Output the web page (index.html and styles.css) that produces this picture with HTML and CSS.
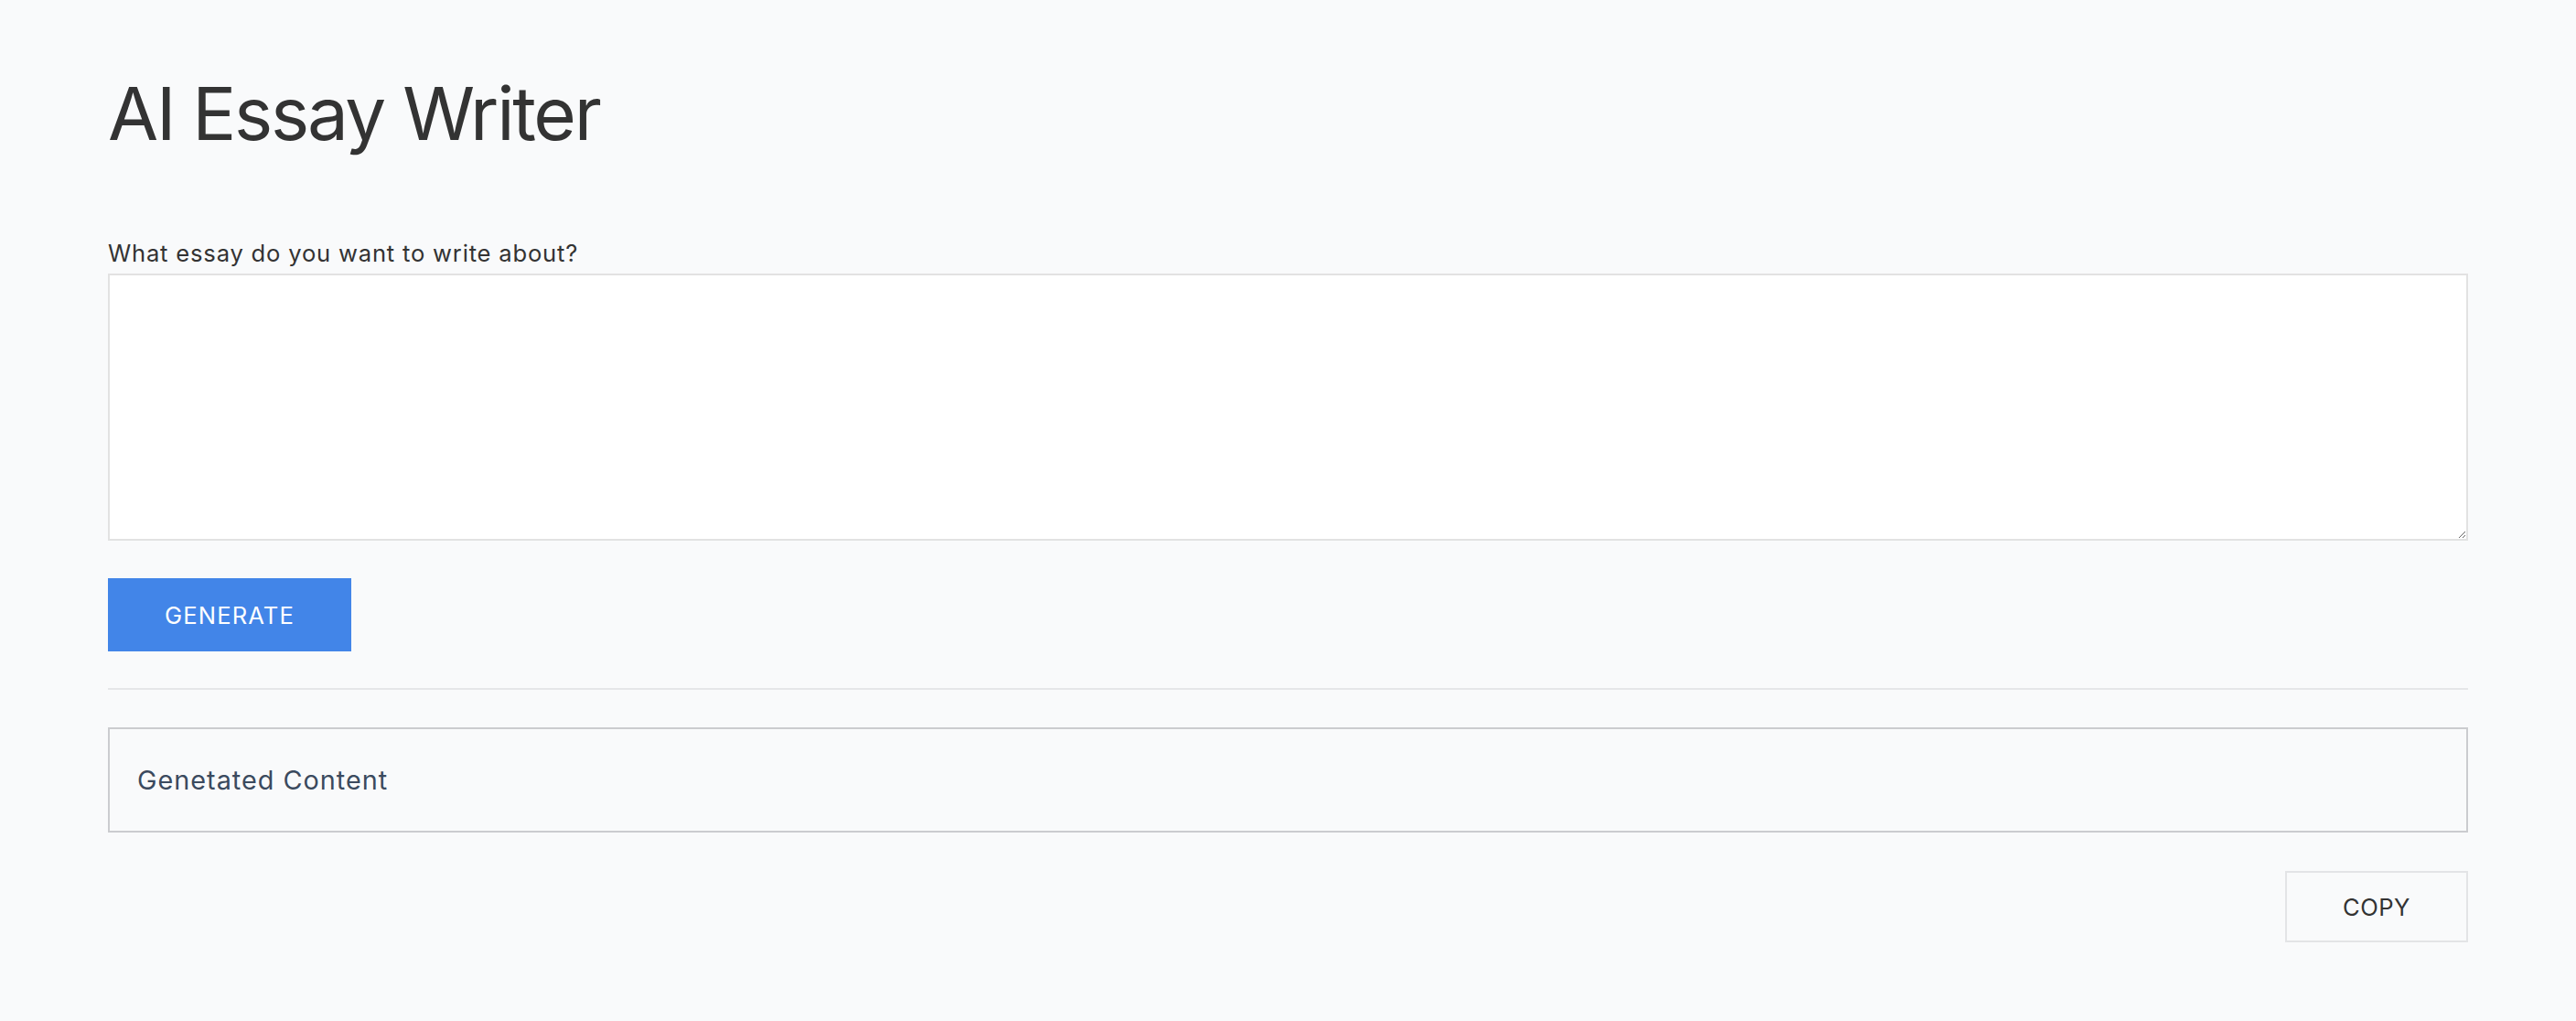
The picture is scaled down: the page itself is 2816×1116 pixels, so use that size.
FILE: index.html
```html
<!DOCTYPE html>
<html lang="en">
<head>
<meta charset="utf-8">
<title>AI Essay Writer</title>
<link rel="stylesheet" href="styles.css">
</head>
<body>
<main class="page">
  <h1 class="title">AI Essay Writer</h1>
  <form class="prompt-form">
    <label class="prompt-label" for="topic">What essay do you want to write about?</label>
    <textarea id="topic" class="prompt-input"></textarea>
    <div class="actions">
      <button type="button" class="btn btn-primary">GENERATE</button>
    </div>
  </form>
  <hr class="divider">
  <section class="output">Genetated Content</section>
  <div class="copy-row">
    <button type="button" class="btn btn-outline">COPY</button>
  </div>
</main>
</body>
</html>
```

FILE: styles.css
```css
* { box-sizing: border-box; }

html, body {
  margin: 0;
  background: #f9fafb;
}

body {
  font-family: Inter, "Noto Sans", "Liberation Sans", sans-serif;
  color: #333333;
}

.page {
  padding: 76px 118px 40px;
  display: flex;
  flex-direction: column;
}

.title {
  margin: 0;
  font-size: 80px;
  font-weight: 400;
  line-height: 96px;
  color: #333333;
  letter-spacing: -2.3px;
}

.prompt-form {
  margin-top: 85px;
  display: flex;
  flex-direction: column;
}

.prompt-label {
  font-size: 25.6px;
  line-height: 39px;
  color: #333333;
  letter-spacing: 0.8px;
}

.prompt-input {
  margin-top: 3px;
  width: 100%;
  height: 292px;
  border: 2px solid #e2e2e2;
  background: #ffffff;
  border-radius: 0;
  padding: 12px;
  font-family: inherit;
  font-size: 25.6px;
  resize: vertical;
  outline: none;
}

.actions {
  margin-top: 41px;
  display: flex;
}

.btn {
  font-family: inherit;
  font-size: 25.6px;
  font-weight: 400;
  border-radius: 0;
  cursor: pointer;
  display: flex;
  align-items: center;
  justify-content: center;
}

.btn-primary {
  width: 266px;
  height: 80px;
  background: #4285e8;
  color: #ffffff;
  border: none;
  letter-spacing: 1.1px;
}

.divider {
  margin: 40px 0 0;
  border: none;
  height: 2px;
  background: #e5e6e8;
}

.output {
  margin-top: 41px;
  border: 2px solid #cbcccf;
  padding: 38px 30px;
  font-size: 28.8px;
  line-height: 35px;
  color: #3b4a5e;
  letter-spacing: 1px;
}

.copy-row {
  margin-top: 42px;
  display: flex;
  justify-content: flex-end;
}

.btn-outline {
  width: 200px;
  height: 78px;
  background: #f9fafb;
  color: #333333;
  border: 2px solid #e3e4e6;
  letter-spacing: 0.5px;
}
```
